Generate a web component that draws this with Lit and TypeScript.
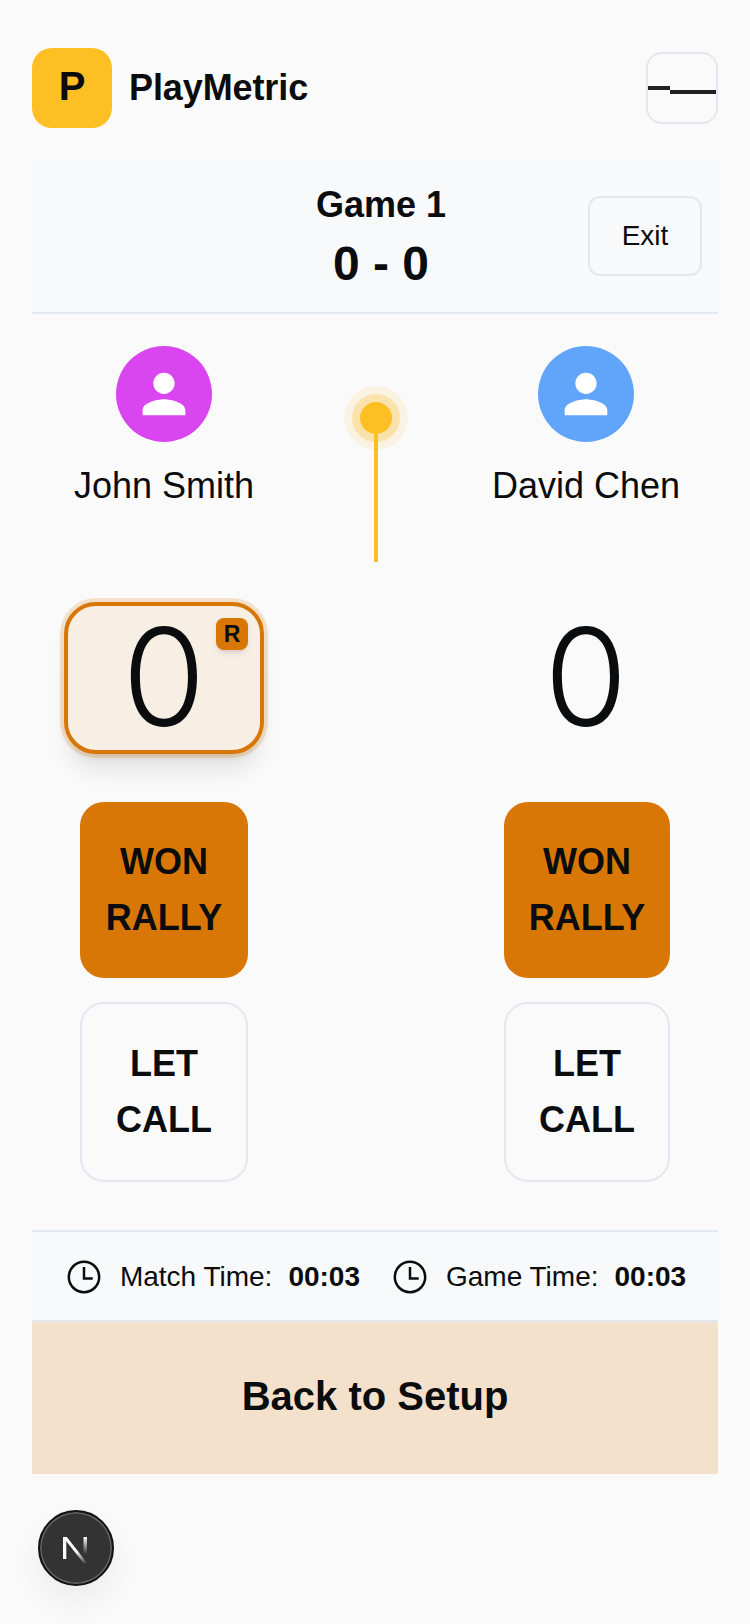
import { LitElement, html, css, svg } from "lit";
import { customElement } from "lit/decorators.js";

const person = svg`<path d="M12 12c2.21 0 4-1.79 4-4s-1.79-4-4-4-4 1.79-4 4 1.79 4 4 4zm0 2c-2.67 0-8 1.34-8 4v2h16v-2c0-2.66-5.33-4-8-4z" fill="#fff"/>`;

@customElement("app-root")
export class AppRoot extends LitElement {
  static styles = css`
    :host { display: block; min-height: 1624px; background: #fafafa; color: #0a0c0e; font-family: "Liberation Sans", Arial, sans-serif; }
    * { box-sizing: border-box; }
    .page { padding: 48px 32px 0; display: flex; flex-direction: column; }
    .head { display: flex; justify-content: space-between; align-items: center; height: 80px; }
    .brand { display: flex; align-items: center; gap: 17px; }
    .logo { width: 80px; height: 80px; border-radius: 20px; background: #fdbf24; display: flex; align-items: center; justify-content: center; font-size: 40px; font-weight: 700; padding-bottom: 4px; }
    .title { font-size: 36px; font-weight: 700; letter-spacing: -.1px; }
    .menu { width: 72px; height: 72px; border: 2px solid #e2e8f0; border-radius: 16px; display: flex; align-items: center; }
    .menu i { display: block; height: 4px; background: #222; }
    .menu i:first-child { width: 22px; }
    .menu i:last-child { width: 46px; margin-top: 8px; }
    .game { margin-top: 32px; height: 154px; background: #f8f9fb; border-bottom: 2px solid #e2e8f0; padding: 1px 0 0 12px; position: relative; display: flex; flex-direction: column; align-items: center; justify-content: center; gap: 15px; }
    .gname { font-size: 36px; font-weight: 700; line-height: 40px; }
    .gscore { font-size: 48px; font-weight: 700; line-height: 48px; }
    .exit { position: absolute; right: 16px; top: 36px; width: 114px; height: 80px; border: 2px solid #e2e8f0; border-radius: 12px; display: flex; align-items: center; justify-content: center; font-size: 28px; }
    .board { display: grid; grid-template-columns: 264px 1fr 264px; height: 916px; }
    .side { display: flex; flex-direction: column; align-items: center; padding-top: 32px; }
    .avatar { width: 96px; height: 96px; border-radius: 50%; display: flex; align-items: center; justify-content: center; }
    .avatar svg { width: 64px; height: 64px; display: block; }
    .name { font-size: 36px; line-height: 40px; margin-top: 24px; }
    .score { width: 200px; height: 152px; margin-top: 96px; padding-bottom: 2px; border-radius: 32px; display: flex; align-items: center; justify-content: center; font-family: "Inter", sans-serif; font-weight: 270; font-size: 135px; line-height: 136px; position: relative; border: 4px solid transparent; }
    .score.on { background: #f7eee4; border-color: #d97706; box-shadow: 0 0 0 4px rgba(217,119,6,.2), 0 20px 25px -5px rgba(0,0,0,.1), 0 8px 10px -6px rgba(0,0,0,.1); }
    .badge { position: absolute; top: 12px; right: 12px; width: 32px; height: 32px; border-radius: 8px; background: #d97706; font-family: "Liberation Sans", sans-serif; font-size: 23px; font-weight: 700; line-height: 32px; text-align: center; box-shadow: 0 4px 6px -1px rgba(0,0,0,.1), 0 2px 4px -2px rgba(0,0,0,.1); }
    .btn { width: 168px; border-radius: 24px; display: flex; flex-direction: column; align-items: center; justify-content: center; font-size: 36px; font-weight: 700; line-height: 56px; text-align: center; }
    .right .btn { width: 166px; align-self: flex-end; margin-right: 48px; }
    .won { height: 176px; margin-top: 48px; background: #d97706; }
    .let { height: 180px; margin-top: 24px; border: 2px solid #e2e8f0; }
    .mid { display: flex; flex-direction: column; align-items: center; padding: 88px 0 0 2px; }
    .dot { width: 32px; height: 32px; border-radius: 50%; background: #fdbf24; box-shadow: 0 0 0 8px rgba(253,191,36,.3), 0 0 0 16px rgba(253,191,36,.1); flex: none; }
    .line { width: 4px; height: 128px; background: #fdbf24; }
    .times { height: 92px; background: #f8f9fb; border-top: 2px solid #e2e8f0; border-bottom: 2px solid #e2e8f0; padding: 2px 0 0 2px; display: flex; align-items: center; justify-content: center; gap: 32px; font-size: 28px; }
    .time { display: flex; align-items: center; }
    .time svg { width: 36px; height: 36px; margin-right: 18px; display: block; }
    .time b { margin-left: 16px; }
    .back { height: 152px; background: #f3e1cb; padding-bottom: 4px; display: flex; align-items: center; justify-content: center; font-size: 40px; font-weight: 700; }
    .nx { position: fixed; left: 38px; top: 1510px; width: 76px; height: 76px; border-radius: 50%; background: #333; border: 2px solid #111; box-shadow: inset 0 0 0 1.5px #666, 0 16px 32px rgba(0,0,0,.06); display: flex; align-items: center; justify-content: center; }
    .nx svg { width: 32px; height: 32px; display: block; }
  `;

  clock() {
    return html`<svg viewBox="0 0 36 36" fill="none" stroke="#0a0c0e" stroke-width="2.5"><circle cx="18" cy="18" r="15.200"/><path d="M18 8v11.500h8.700"/></svg>`;
  }

  side(name: string, color: string, on: boolean) {
    return html`<div class="side ${on ? "" : "right"}">
      <div class="avatar" style="background:${color}"><svg viewBox="0 0 24 24">${person}</svg></div>
      <div class="name">${name}</div>
      <div class="score ${on ? "on" : ""}">0${on ? html`<span class="badge">R</span>` : ""}</div>
      <div class="btn won"><span>WON</span><span>RALLY</span></div>
      <div class="btn let"><span>LET</span><span>CALL</span></div>
    </div>`;
  }

  render() {
    return html`<div class="page">
      <div class="head">
        <div class="brand"><div class="logo">P</div><div class="title">PlayMetric</div></div>
        <div class="menu"><i></i><i></i></div>
      </div>
      <div class="game">
        <div class="gname">Game 1</div>
        <div class="gscore">0 - 0</div>
        <div class="exit">Exit</div>
      </div>
      <div class="board">
        ${this.side("John Smith", "#d946ef", true)}
        <div class="mid"><div class="dot"></div><div class="line"></div></div>
        ${this.side("David Chen", "#60a5fa", false)}
      </div>
      <div class="times">
        <div class="time">${this.clock()}<span>Match Time:</span><b>00:03</b></div>
        <div class="time">${this.clock()}<span>Game Time:</span><b>00:03</b></div>
      </div>
      <div class="back">Back to Setup</div>
    </div>
    <div class="nx"><svg viewBox="0 0 32 32"><defs><linearGradient id="a" gradientUnits="userSpaceOnUse" x1="10" y1="8" x2="26" y2="32"><stop offset=".45" stop-color="#fff"/><stop offset="1" stop-color="#fff" stop-opacity="0"/></linearGradient><linearGradient id="b" x1="0" y1="0" x2="0" y2="1"><stop offset="0" stop-color="#fff"/><stop offset="1" stop-color="#fff" stop-opacity="0"/></linearGradient></defs><path d="M3 5h3.300v22H3z" fill="#fff"/><path d="M3 5h3.800L28 32h-3.800z" fill="url(#a)"/><path d="M23.500 5h3.500v17h-3.500z" fill="url(#b)"/></svg></div>`;
  }
}
